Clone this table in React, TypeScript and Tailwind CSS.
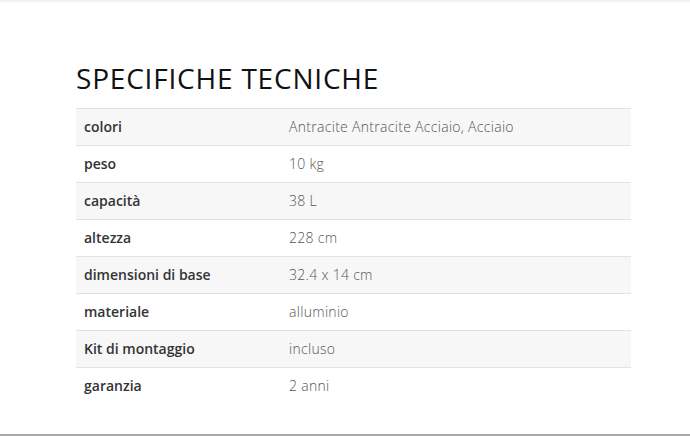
const specs: ReadonlyArray<[string, string]> = [
  ['colori', 'Antracite Antracite Acciaio, Acciaio'],
  ['peso', '10 kg'],
  ['capacità', '38 L'],
  ['altezza', '228 cm'],
  ['dimensioni di base', '32.4 x 14 cm'],
  ['materiale', 'alluminio'],
  ['Kit di montaggio', 'incluso'],
  ['garanzia', '2 anni'],
]

export default function App() {
  return (
    <div
      className="h-[436px] w-[690px] bg-white flex flex-col border-t-2 border-[#f2f2f2]"
      style={{ fontFamily: '"Open Sans", Lato, sans-serif' }}
    >
      <div className="flex-1 pl-[76px] pr-[59px] pt-[59px]">
        <h2 className="text-[28px] leading-[34px] font-normal text-[#111] tracking-[0.8px] mb-[13px]">
          SPECIFICHE TECNICHE
        </h2>
        <table className="w-[555px] border-collapse text-[14px]">
          <tbody>
            {specs.map(([k, v], i) => (
              <tr
                key={k}
                className={
                  (i % 2 === 0 ? 'bg-[#f7f7f7] ' : 'bg-white ') +
                  'border-t border-[#e2e2e2] h-[37px]'
                }
              >
                <td className="w-[205px] pl-[8px] pb-[1px] font-semibold text-[#333]">{k}</td>
                <td className="pl-[8px] pb-[1px] font-light tracking-[0.3px] text-[#555]">{v}</td>
              </tr>
            ))}
          </tbody>
        </table>
      </div>
      <div className="h-[2px] bg-[#aaaaaa]" />
    </div>
  )
}
